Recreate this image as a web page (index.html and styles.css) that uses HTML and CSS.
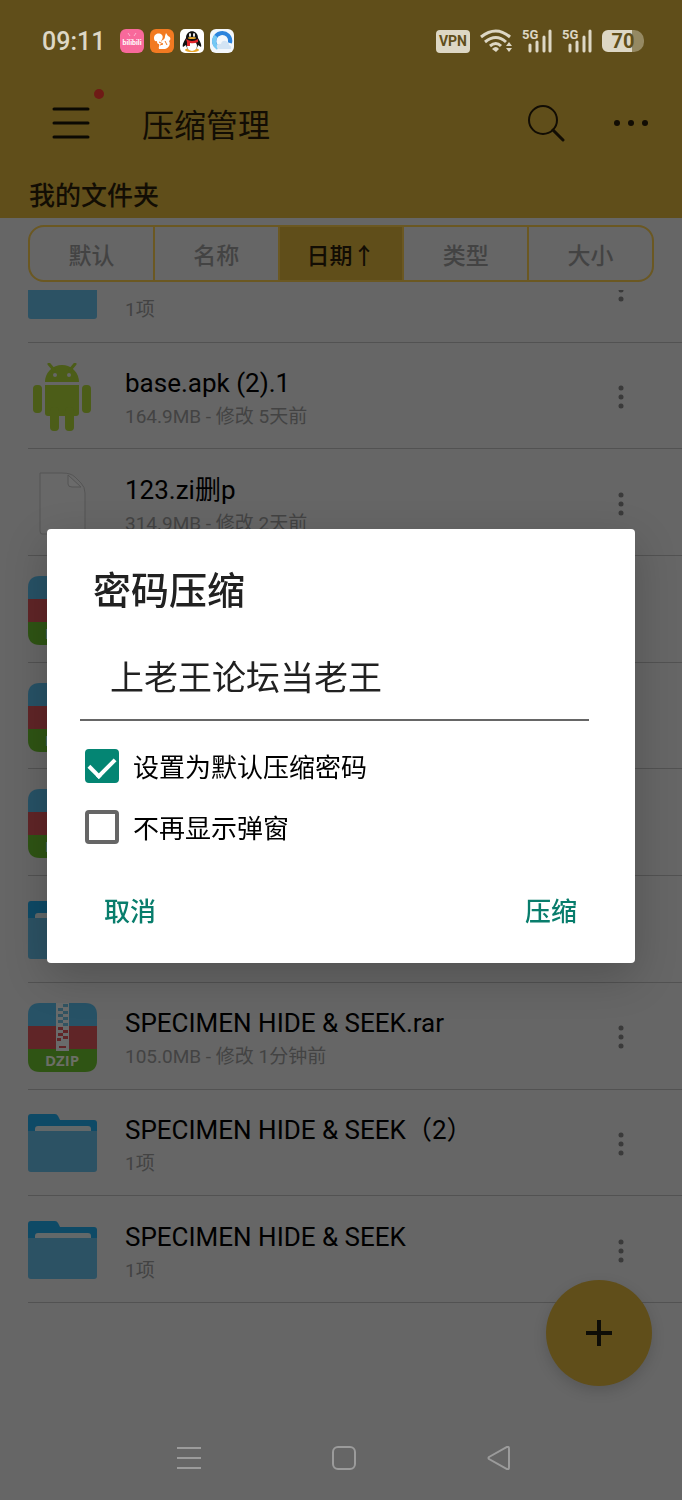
FILE: index.html
```html
<!DOCTYPE html>
<html lang="zh-CN">
<head>
    <meta charset="UTF-8">
    <meta name="viewport" content="width=device-width, initial-scale=1.0">
    <title>压缩管理</title>
    <link rel="stylesheet" href="styles.css">
</head>
<body>
    <!-- shared icons -->
    <svg class="sprite" aria-hidden="true">
        <symbol id="folder" viewBox="0 0 69 69">
            <path d="M0 24V8q0-3 3-3h24q2 0 3 2l2 4h34q3 0 3 3v10z" fill="#0e4a66"/>
            <path d="M7 23v-3q0-3 3-3h50q3 0 3 3v3z" fill="#626869"/>
            <path d="M0 22h69v38q0 3-3 3H3q-3 0-3-3z" fill="#2c5264"/>
        </symbol>
        <symbol id="android" viewBox="0 0 69 69">
            <g fill="#4c5d18">
                <path d="M17 19a17 17 0 0 1 34 0z"/>
                <path d="M17 22h34v28q0 3-3 3H20q-3 0-3-3z"/>
                <rect x="5" y="22" width="9" height="28" rx="4"/>
                <rect x="54" y="22" width="9" height="28" rx="4"/>
                <rect x="22" y="44" width="9" height="24" rx="4"/>
                <rect x="37" y="44" width="9" height="24" rx="4"/>
            </g>
            <path d="M21 1l5 6M47 1l-5 6" stroke="#4c5d18" stroke-width="3" stroke-linecap="round"/>
            <circle cx="27" cy="12" r="2" fill="#666"/>
            <circle cx="41" cy="12" r="2" fill="#666"/>
        </symbol>
        <symbol id="blank" viewBox="0 0 69 69">
            <path d="M12 4h22q9 0 13 4l6 6q4 4 4 10v38q0 3-3 3H14q-2 0-2-3z" fill="#686868" stroke="#555"/>
            <path d="M40 6v9q0 3 4 3h9z" fill="#6b6b6b" stroke="#555"/>
        </symbol>
        <symbol id="dzip" viewBox="0 0 69 69">
            <path d="M0 24V12Q0 0 12 0h45q12 0 12 12v12z" fill="#275266"/>
            <path d="M0 23h69v23H0z" fill="#602527"/>
            <path d="M0 46h69v11q0 12-12 12H12Q0 69 0 57z" fill="#2f5414"/>
            <path d="M28 0h13v48H28z" fill="#696b6b"/>
            <path d="M30 5h5v3h-5zm0 6h5v3h-5zm0 6h5v3h-5zm5-16h5v3h-5zm0 7h5v3h-5zm0 6h5v3h-5zm0 6h5v3h-5z" fill="#315361"/>
            <path d="M30 24h5v3h-5zm0 6h5v3h-5zm5-3h5v3h-5zm0 6h5v3h-5zM29 35h4v3h-4zm2 8h7v2h-7z" fill="#602527"/>
            <text x="34" y="63" class="zip-label">DZIP</text>
        </symbol>
        <symbol id="dots" viewBox="0 0 8 24">
            <g fill="#3a3a3a"><circle cx="4" cy="3" r="2.5"/><circle cx="4" cy="12" r="2.5"/><circle cx="4" cy="21" r="2.5"/></g>
        </symbol>
        <symbol id="signal" viewBox="0 0 30 26">
            <path d="M8 17v6M15 14v9M22 9v14M28 3v20" stroke="#ddd7c5" stroke-width="3" stroke-linecap="round"/>
            <text x="0" y="11" class="net-label">5G</text>
        </symbol>
    </svg>

    <div class="screen">
        <header class="top">
            <div class="status">
                <span class="time">09:11</span>
                <div class="apps">
                    <svg viewBox="0 0 24 24">
                        <rect width="24" height="24" rx="6" fill="#f8699b"/>
                        <path d="M8 4l2 3M16 4l-2 3" stroke="#fbb4cf"/>
                        <text x="12" y="16" class="bili-label">bilibili</text>
                    </svg>
                    <svg viewBox="0 0 24 24">
                        <rect width="24" height="24" rx="6" fill="#f27a21"/>
                        <path d="M4 9c0-4 5-6 8-3 2 3-1 5-1 7 2-3 4-2 4-6l1-3 2 3c3 1 3 4 1 5 2 3 0 7-4 8H9c-1-2 1-3 0-5-2 0-2-2-2-3-2 1-3-1-3-3z" fill="#fff"/>
                        <path d="M9 13l4 2-3 1M15 12l2 4" stroke="#f27a21" fill="none"/>
                    </svg>
                    <svg viewBox="0 0 24 24">
                        <rect width="24" height="24" rx="5" fill="#fff"/>
                        <ellipse cx="12" cy="21" rx="7" ry="2" fill="#e9a72a"/>
                        <path d="M6 9C6 0 18 0 18 9c2 3 4 7 3 9l-3-2c-1 7-11 7-12 0l-3 2c-1-2 1-6 3-9z" fill="#111"/>
                        <ellipse cx="12" cy="17" rx="5" ry="5" fill="#fff"/>
                        <ellipse cx="10" cy="6" rx="1" ry="2" fill="#fff"/>
                        <ellipse cx="14" cy="6" rx="1" ry="2" fill="#fff"/>
                        <ellipse cx="12" cy="9" rx="4" ry="1" fill="#e9a72a"/>
                        <path d="M6 10q6 4 12 0v3q-4 2-8 1v3H7v-4z" fill="#e0262c"/>
                    </svg>
                    <svg viewBox="0 0 24 24">
                        <rect width="24" height="24" rx="6" fill="#f3f7fb"/>
                        <path d="M6 17A8 8 0 1 1 20 14" fill="none" stroke="#2b83dc" stroke-width="4"/>
                        <path d="M8 19A8 8 0 0 1 6 7" fill="none" stroke="#74c8f4" stroke-width="4"/>
                        <path d="M9 20q-3-1-2-4 2-2 4-1 1-4 5-3 3 1 3 4 3 1 2 4z" fill="#d3e4f4"/>
                    </svg>
                </div>
                <div class="signals">
                    <span class="vpn">VPN</span>
                    <svg class="wifi" viewBox="0 0 32 26">
                        <g fill="none" stroke="#ddd7c5" stroke-width="3">
                            <path d="M1 9q15-12 29 0M5 14q11-9 21 0M10 18q6-5 11 0"/>
                        </g>
                        <path d="M12 21q4-4 7 0l-3 3z" fill="#ddd7c5"/>
                        <path d="M26 18l3-4 3 4zM26 20h6l-3 4z" fill="#ddd7c5"/>
                    </svg>
                    <svg class="bars"><use href="#signal"/></svg>
                    <svg class="bars"><use href="#signal"/></svg>
                    <span class="battery">70</span>
                </div>
            </div>
            <div class="bar">
                <button class="icon-btn menu" aria-label="菜单">
                    <svg width="38" height="32" viewBox="0 0 38 32">
                        <path d="M2 2h34M2 16h34M2 30h34" stroke="#0b0903" stroke-width="3" stroke-linecap="round"/>
                    </svg>
                    <i class="badge"></i>
                </button>
                <h1>压缩管理</h1>
                <button class="icon-btn" aria-label="搜索">
                    <svg width="38" height="38" viewBox="0 0 38 38" fill="none" stroke="#120d04">
                        <circle cx="16" cy="16" r="14" stroke-width="2"/>
                        <path d="M26 26l10 10" stroke-width="3" stroke-linecap="round"/>
                    </svg>
                </button>
                <button class="icon-btn" aria-label="更多">
                    <svg width="34" height="8" viewBox="0 0 34 8" fill="#120d04">
                        <circle cx="3" cy="4" r="3"/><circle cx="17" cy="4" r="3"/><circle cx="31" cy="4" r="3"/>
                    </svg>
                </button>
            </div>
            <h2>我的文件夹</h2>
        </header>

        <div class="tabs">
            <button>默认</button>
            <button>名称</button>
            <button class="active">日期↑</button>
            <button>类型</button>
            <button>大小</button>
        </div>

        <main class="files">
            <ul>
                <li>
                    <svg class="thumb"><use href="#folder"/></svg>
                    <div class="info"><b></b><span>1项</span></div>
                    <button class="more" aria-label="更多"><svg><use href="#dots"/></svg></button>
                </li>
                <li>
                    <svg class="thumb"><use href="#android"/></svg>
                    <div class="info"><b>base.apk (2).1</b><span>164.9MB - 修改 5天前</span></div>
                    <button class="more" aria-label="更多"><svg><use href="#dots"/></svg></button>
                </li>
                <li>
                    <svg class="thumb"><use href="#blank"/></svg>
                    <div class="info"><b>123.zi删p</b><span>314.9MB - 修改 2天前</span></div>
                    <button class="more" aria-label="更多"><svg><use href="#dots"/></svg></button>
                </li>
                <li><svg class="thumb"><use href="#dzip"/></svg></li>
                <li><svg class="thumb"><use href="#dzip"/></svg></li>
                <li><svg class="thumb"><use href="#dzip"/></svg></li>
                <li><svg class="thumb"><use href="#folder"/></svg></li>
                <li>
                    <svg class="thumb"><use href="#dzip"/></svg>
                    <div class="info"><b>SPECIMEN HIDE &amp; SEEK.rar</b><span>105.0MB - 修改 1分钟前</span></div>
                    <button class="more" aria-label="更多"><svg><use href="#dots"/></svg></button>
                </li>
                <li>
                    <svg class="thumb"><use href="#folder"/></svg>
                    <div class="info"><b>SPECIMEN HIDE &amp; SEEK（2）</b><span>1项</span></div>
                    <button class="more" aria-label="更多"><svg><use href="#dots"/></svg></button>
                </li>
                <li>
                    <svg class="thumb"><use href="#folder"/></svg>
                    <div class="info"><b>SPECIMEN HIDE &amp; SEEK</b><span>1项</span></div>
                    <button class="more" aria-label="更多"><svg><use href="#dots"/></svg></button>
                </li>
            </ul>
        </main>

        <nav class="sysnav">
            <button aria-label="最近任务">
                <svg viewBox="0 0 24 24"><path d="M0 2h24M0 12h24M0 22h24"/></svg>
            </button>
            <button aria-label="主页">
                <svg viewBox="0 0 24 24"><rect x="1" y="1" width="22" height="22" rx="5"/></svg>
            </button>
            <button aria-label="返回">
                <svg viewBox="0 0 24 24"><path d="M2 11L20 1q2-1 2 2v18q0 3-2 2L2 13q-1-1 0-2z"/></svg>
            </button>
        </nav>
    </div>

    <button class="fab" aria-label="新建">
        <svg width="28" height="28" viewBox="0 0 28 28"><path d="M14 1v26M1 14h26" stroke="#0e0d07" stroke-width="4"/></svg>
    </button>

    <div class="overlay">
        <form class="dialog" role="dialog" aria-labelledby="dialog-title">
            <h3 id="dialog-title">密码压缩</h3>
            <input class="pwd" type="text" name="pwd" value="上老王论坛当老王" aria-label="密码">
            <label class="check"><input type="checkbox" name="default" checked>设置为默认压缩密码</label>
            <label class="check"><input type="checkbox" name="hide">不再显示弹窗</label>
            <div class="actions">
                <button type="button">取消</button>
                <button type="button">压缩</button>
            </div>
        </form>
    </div>
</body>
</html>
```
FILE: styles.css
```css
*{
    box-sizing: border-box;
}
body{
    margin: 0;
    background: #666;
    font-family: Roboto, "Noto Sans CJK SC", sans-serif;
    color: #000;
}
h1, h2, h3, ul{
    margin: 0;
    padding: 0;
}
button{
    border: none;
    background: none;
    padding: 0;
    font-family: inherit;
    color: inherit;
}
svg{
    display: block;
}
.sprite{
    position: absolute;
    width: 0;
    height: 0;
}
.screen{
    display: flex;
    flex-direction: column;
    height: 100vh;
}

/* header */
.top{
    background: #604e1a;
    color: #120d04;
}
.status{
    display: flex;
    align-items: center;
    height: 82px;
    padding: 0 38px 0 42px;
    color: #ddd7c5;
}
.time{
    font-size: 25px;
    font-weight: 500;
}
.apps{
    display: flex;
    gap: 6px;
    margin-left: 15px;
}
.apps svg{
    width: 24px;
    height: 24px;
}
.bili-label{
    font: bold 7px Roboto, sans-serif;
    fill: #fff;
    text-anchor: middle;
}
.signals{
    display: flex;
    align-items: center;
    gap: 10px;
    margin-left: auto;
}
.vpn{
    padding: 0 3px;
    border-radius: 4px;
    background: #ddd7c5;
    color: #604e1a;
    font-size: 14px;
    font-weight: 700;
    line-height: 23px;
}
.wifi{
    width: 32px;
    height: 26px;
}
.bars{
    width: 30px;
    height: 26px;
}
.net-label{
    font: bold 13px Roboto, sans-serif;
    fill: #ddd7c5;
}
.battery{
    width: 42px;
    border-radius: 6px 10px 10px 6px;
    background: linear-gradient(to right, #ddd7c5 30px, #958963 30px);
    color: #604e1a;
    font-size: 20px;
    font-weight: 700;
    line-height: 22px;
    text-align: center;
}
.bar{
    display: flex;
    align-items: center;
    height: 82px;
    padding: 0 34px 0 52px;
}
.bar h1{
    flex: 1;
    margin-left: 52px;
    font-size: 32px;
    font-weight: 400;
}
.icon-btn{
    position: relative;
    margin-left: 49px;
}
.menu{
    margin-left: 0;
}
.badge{
    position: absolute;
    top: -18px;
    right: -14px;
    width: 10px;
    height: 10px;
    border-radius: 50%;
    background: #6e1a16;
}
.top h2{
    height: 54px;
    padding-left: 29px;
    font-size: 26px;
    font-weight: 500;
    line-height: 64px;
}

/* sort tabs */
.tabs{
    display: flex;
    margin: 7px 28px 8px;
    border: 2px solid #6b5822;
    border-radius: 16px;
    overflow: hidden;
}
.tabs button{
    flex: 1;
    height: 53px;
    color: #434343;
    font-size: 23px;
    font-weight: 500;
}
.tabs button + button{
    border-left: 2px solid #6b5822;
}
.tabs .active{
    background: #604e1a;
    color: #120d04;
}

/* file list, scrolled half a row down */
.files{
    flex: 1;
    min-height: 0;
    overflow: hidden;
}
.files ul{
    display: grid;
    grid-auto-rows: 1fr;
    height: calc(100% + 54px);
    margin-top: -54px;
    list-style: none;
}
.files li{
    display: flex;
    align-items: center;
    margin-left: 28px;
    padding-top: 3px;
    border-bottom: 1px solid #525252;
}
.thumb{
    width: 69px;
    height: 69px;
}
.info{
    flex: 1;
    margin-left: 28px;
    padding-top: 4px;
}
.info b{
    display: block;
    min-height: 36px;
    font-size: 26px;
    font-weight: 400;
    line-height: 36px;
}
.info span{
    display: block;
    color: #434343;
    font-size: 19px;
    line-height: 32px;
}
.more{
    margin-right: 57px;
}
.more svg{
    width: 8px;
    height: 24px;
}
.zip-label{
    font: bold 15px "Open Sans", sans-serif;
    fill: #6b6e66;
    text-anchor: middle;
}

/* system navigation */
.sysnav{
    display: flex;
    justify-content: center;
    align-items: flex-end;
    gap: 131px;
    height: 197px;
    padding: 0 0 30px 6px;
}
.sysnav svg{
    width: 24px;
    height: 24px;
    fill: none;
    stroke: #9b9b9b;
    stroke-width: 2;
}
.fab{
    position: fixed;
    right: 30px;
    bottom: 114px;
    display: flex;
    justify-content: center;
    align-items: center;
    width: 106px;
    height: 106px;
    border-radius: 50%;
    background: #604e1a;
    box-shadow: 0 5px 14px rgba(0, 0, 0, 0.15);
}

/* dialog */
.overlay{
    position: fixed;
    inset: 0;
    display: flex;
    align-items: center;
    padding: 0 47px 8px;
}
.dialog{
    flex: 1;
    padding: 40px 34px 30px 33px;
    border-radius: 4px;
    background: #fff;
    box-shadow: 0 14px 44px rgba(0, 0, 0, 0.2);
}
.dialog h3{
    margin-left: 13px;
    color: #212121;
    font-size: 38px;
    font-weight: 500;
    line-height: 44px;
}
.pwd{
    display: block;
    width: calc(100% - 12px);
    height: 86px;
    margin-top: 22px;
    padding: 0 30px 4px;
    border: none;
    border-bottom: 2px solid #666;
    background: none;
    color: #212121;
    font-family: inherit;
    font-size: 34px;
    outline: none;
}
.check{
    display: flex;
    align-items: center;
    gap: 14px;
    height: 61px;
    margin-left: 5px;
    font-size: 26px;
}
.pwd + .check{
    margin-top: 14px;
}
.check input{
    appearance: none;
    width: 34px;
    height: 34px;
    margin: 0;
    border: 4px solid #666;
    border-radius: 4px;
}
.check input:checked{
    display: flex;
    justify-content: center;
    align-items: flex-start;
    border-color: #048573;
    background: #048573;
}
.check input:checked::before{
    content: "";
    width: 12px;
    height: 21px;
    border: solid #fff;
    border-width: 0 4px 4px 0;
    transform: translateY(-1px) rotate(45deg);
}
.actions{
    display: flex;
    justify-content: space-between;
    margin-top: 28px;
}
.actions button{
    height: 48px;
    padding: 0 24px;
    color: #087d6c;
    font-size: 26px;
    font-weight: 500;
}
```
